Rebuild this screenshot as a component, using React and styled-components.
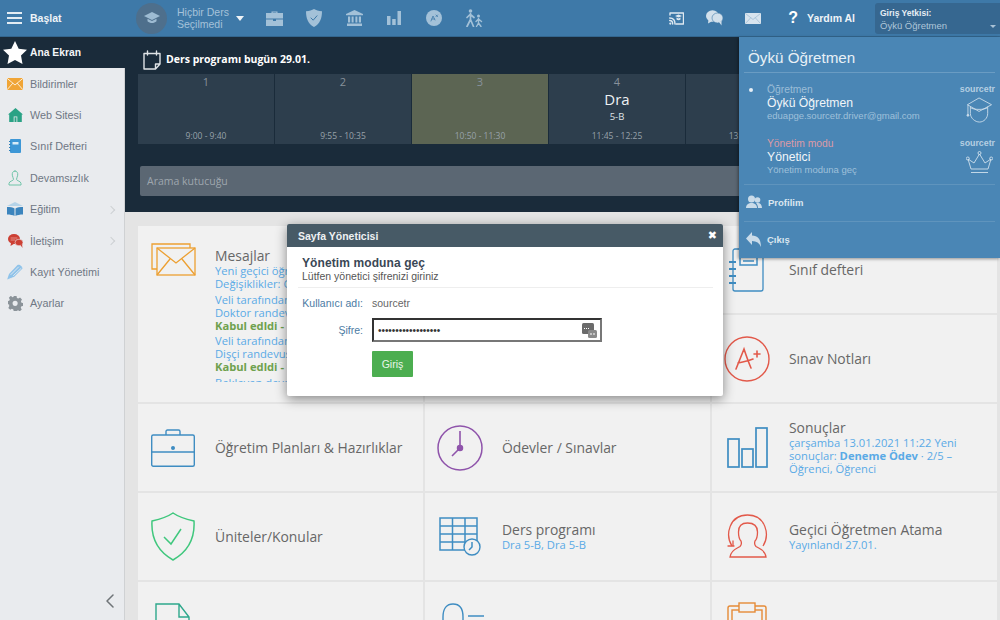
import styled, { createGlobalStyle } from 'styled-components'

const GlobalStyle = createGlobalStyle`
    html, body { margin: 0; padding: 0; background: #e4e4e4; }
    * { box-sizing: border-box; }
`

const Line = ({ d, c = 'currentColor', w = 1.4 }) => <path d={d} fill="none" stroke={c} strokeWidth={w} strokeLinecap="round" strokeLinejoin="round" />

/* top bar icons */
const CapIcon = () => (
    <svg width="16" height="12" viewBox="0 0 16 12" fill="#9dbbd2"><path d="M8 0 16 4 8 8 0 4z" /><path d="M3.500 6.700v2.600c2.500 2.400 6.500 2.400 9 0V6.700L8 9z" /></svg>
)
const CaseSolid = () => (
    <svg width="17" height="15" viewBox="0 0 17 15" fill="currentColor"><path d="M5.500 2V.6h6V2H17v5.500H0V2zM6.700 2h3.600v-.6H6.700z" /><path d="M0 8.500h7v1.500h3V8.500h7V15H0z" /></svg>
)
const ShieldSolid = () => (
    <svg width="16" height="18" viewBox="0 0 16 18"><path d="M8 0c2 1.300 4.500 2 8 2.200 0 7-2 12.500-8 15.800C2 14.700 0 9.200 0 2.200 3.500 2 6 1.300 8 0z" fill="currentColor" /><Line d="M5 9l2.200 2.200L11 6.800" c="#3e79a8" w={1} /></svg>
)
const BankSolid = () => (
    <svg width="17" height="16" viewBox="0 0 17 16" fill="currentColor"><path d="M8.500 0 17 4v1.300H0V4z" /><path d="M2 6.500h2.200v6H2zM5.600 6.500h2v6h-2zM9.400 6.500h2v6h-2zM12.800 6.500H15v6h-2.200zM1 13.500h15V16H1z" /></svg>
)
const BarsSolid = () => (
    <svg width="14" height="14" viewBox="0 0 14 14" fill="currentColor"><path d="M0 5h3.500v9H0zM5.200 8h3.500v6H5.200zM10.500 0H14v14h-3.500z" /></svg>
)
const GradeSolid = () => (
    <svg width="16" height="16" viewBox="0 0 16 16"><circle cx="8" cy="8" r="8" fill="currentColor" /><Line d="M5 11l2-5 2 4M6 9h2.500M10 5l1.600 1.600M11.600 5 10 6.600" c="#3e79a8" w={.8} /></svg>
)
const WalkSolid = () => (
    <svg width="18" height="18" viewBox="0 0 18 18"><circle cx="5.500" cy="2" r="1.800" fill="currentColor" /><circle cx="13.500" cy="7" r="1.500" fill="currentColor" /><Line d="M5.500 4.500v6M5.500 5 2 8.500M5.500 5.500 9 8.500M5.500 10.500 2 17.500M5.500 10.500l3 7" w={1.700} /><Line d="M13.500 9.500v4.500M13.500 10l-2.500 2.500M13.500 10l3 2.500M13.500 14l-2 3.500M13.500 14l2.500 3.500" w={1.400} /></svg>
)
const CastIcon = () => (
    <svg width="15" height="13" viewBox="0 0 15 13"><Line d="M1 3V1h13.500v11H7" c="#dfe9f1" /><path d="M6 4l3.500-1.500L13 4 9.500 5.500z" fill="#dfe9f1" /><path d="M7.500 5.500v2c1.200 1 2.800 1 4 0v-2L9.500 6.500z" fill="#dfe9f1" /><Line d="M.7 6c3.300 0 5.300 2 5.300 6M.7 8.500c2 0 3 1.400 3 3.500" c="#dfe9f1" /><circle cx="1.300" cy="11.600" r="1.100" fill="#dfe9f1" /></svg>
)
const ChatIcon = () => (
    <svg width="17" height="16" viewBox="0 0 17 16" fill="#d2e0eb"><ellipse cx="6.500" cy="6" rx="6.500" ry="5.800" /><path d="M2.500 9.500 2 13.500 6.500 11z" /><ellipse cx="11.500" cy="8" rx="5.500" ry="5" stroke="#3e79a8" strokeWidth=".6" /><path d="M13 12l2.500 3.500V11z" /></svg>
)
const MailIcon = () => (
    <svg width="16" height="11" viewBox="0 0 16 11"><rect width="16" height="11" fill="#d8e4ee" /><Line d="M.5.500 8 6.500 15.500.500M.5 10.500 5.500 5M15.500 10.500 10.500 5" c="#8fb2cd" w={.6} /></svg>
)

/* sidebar icons */
const Star = () => (
    <svg width="24" height="23" viewBox="0 0 24 23" fill="#fff"><path d="M12 0l3.700 7.700 8.300 1.100-6 5.800 1.500 8.400L12 19l-7.500 4L6 14.600 0 8.800l8.300-1.100z" /></svg>
)
const SideMail = () => (
    <svg width="16" height="12" viewBox="0 0 16 12"><rect width="16" height="12" fill="#f0a537" /><Line d="M.3.500 8 7 15.700.500M.3 11.500 5.500 5.500M15.700 11.500 10.500 5.500" c="#fff" w={.8} /></svg>
)
const SideHome = () => (
    <svg width="15" height="14" viewBox="0 0 15 14"><path d="M7.500 0 15 6.500h-1.200V14H1.200V6.500H0z" fill="#2aa285" /><path d="M5.700 14V8.500h3.600V14H8.500V9.300h-2V14z" fill="#e9ebee" /></svg>
)
const SideBook = () => (
    <svg width="12" height="14" viewBox="0 0 12 14"><rect x="1" width="11" height="14" rx="1" fill="#3d97d6" /><rect x="3.500" y="3" width="6" height="2.500" fill="#d8ecf8" /><path d="M0 2.500h1.500M0 5.500h1.500M0 8.500h1.500M0 11.500h1.500" stroke="#2d7fb8" /></svg>
)
const SidePerson = () => (
    <svg width="14" height="16" viewBox="0 0 14 16"><Line d="M7 1C4.800 1 4 3 4.300 5.200 4.500 7 5.500 8 5.500 9.300 5.500 11 1 11 1 13.500V15h12v-1.500C13 11 8.500 11 8.500 9.300 8.500 8 9.500 7 9.700 5.200 10 3 9.200 1 7 1z" c="#6ec4a8" w={1} /></svg>
)
const SideEdu = () => (
    <svg width="16" height="14" viewBox="0 0 16 14"><path d="M8 0 16 4H0z" fill="#b5d3e8" /><path d="M0 5c3 0 6 .3 7.500 1.500V14C6 13 3 12.500 0 12.500zM16 5c-3 0-6 .3-7.500 1.500V14c1.500-1 4.500-1.500 7.500-1.500z" fill="#3b84bd" /></svg>
)
const SideTalk = () => (
    <svg width="15" height="14" viewBox="0 0 15 14"><ellipse cx="6" cy="5" rx="6" ry="5" fill="#cc3f33" /><path d="M3 8.500 2.500 12 6.500 9.500z" fill="#cc3f33" /><ellipse cx="11" cy="8.500" rx="4" ry="3.300" fill="#cc3f33" stroke="#e9ebee" strokeWidth=".6" /><path d="M12.500 11 14.500 14 14 10z" fill="#cc3f33" /><Line d="M3 4h6M3 6h4" c="#eeb0a9" w={.7} /></svg>
)
const SidePen = () => (
    <svg width="16" height="16" viewBox="0 0 16 16"><path d="M0 16l2-6L10.500 1c1.500-1.300 5 1.200 5 3.500L6.500 13.500z" fill="#8fc3ea" /><Line d="M4 10.500 11.500 3M6.500 11.500 14 4.500M0 16l6.500-2.500" c="#e9ebee" w={.9} /></svg>
)
const SideGear = () => (
    <svg width="15" height="15" viewBox="0 0 15 15" fill="#8b9399"><path d="M6 0h3l.4 2 1.500.7L12.700 1.600l2 2.100-1.100 1.800.6 1.500 1.800.5v3l-1.900.4-.7 1.500 1.100 1.700-2.100 2-1.800-1-1.500.6L9 16H6l-.4-1.900-1.500-.6-1.700 1-2.100-2 1-1.800L1.200 9 -.5 8.500v-3l1.800-.4.600-1.500-1-1.800 2.100-2L4.700 1.400l1-.4zM7.500 5a2.700 2.700 0 1 0 0 5.400 2.700 2.700 0 0 0 0-5.400z" transform="scale(.95)" /></svg>
)

/* tile icons */
const TileMail = () => (
    <svg width="45" height="33" viewBox="0 0 45 33" stroke="#eda032" strokeWidth="1.300" fill="none"><path d="M6 26H1V1h38v4" /><rect x="6" y="5" width="38" height="27" fill="#f1f1f1" /><path d="M6 5l19 15L44 5M6 32l13-16M44 32 31 16" /></svg>
)
const TileBook = () => (
    <svg width="36" height="44" viewBox="0 0 36 44" fill="none" stroke="#3f8dc2" strokeWidth="1.300"><rect x="4" y="1" width="30" height="42" rx="2" /><rect x="11" y="5" width="17" height="12" strokeWidth="1.500" /><path d="M14 9h11M14 13h11" /><path d="M0 14h7M0 21h7M0 28h7M0 35h7" strokeWidth="1.800" /></svg>
)
const TileGrade = () => (
    <svg width="46" height="46" viewBox="0 0 46 46" fill="none" stroke="#e2594a" strokeWidth="1.400"><circle cx="23" cy="23" r="22" /><path d="M12 33 20 13c2 6 4 12 7 19M14 27c5-1 10-2 15-4M33 15v6M30 18h6" strokeWidth="1.600" strokeLinecap="round" /></svg>
)
const TileCase = () => (
    <svg width="44" height="38" viewBox="0 0 44 38" fill="none" stroke="#3f8dc2" strokeWidth="1.400"><rect x=".7" y="6" width="42.600" height="31.300" rx="1.500" /><path d="M15 6V2.500C15 1.500 15.500 1 16.500 1h11c1 0 1.500.5 1.500 1.500V6M.7 23h42.600" /><circle cx="22" cy="19" r="1.300" fill="#3f8dc2" /></svg>
)
const TileClock = () => (
    <svg width="46" height="46" viewBox="0 0 46 46" fill="none" stroke="#8f54ab" strokeWidth="1.500"><circle cx="23" cy="23" r="22" /><path d="M23 6v17L15 31" strokeWidth="1.600" /><circle cx="23" cy="23" r="2.500" fill="#8f54ab" /></svg>
)
const TileBars = () => (
    <svg width="41" height="41" viewBox="0 0 41 41" fill="none" stroke="#3f8dc2" strokeWidth="1.700"><rect x="1" y="12" width="11" height="28" /><rect x="15" y="22" width="11" height="18" /><rect x="29" y="1" width="11" height="39" /></svg>
)
const TileShield = () => (
    <svg width="44" height="49" viewBox="0 0 44 49" fill="none" stroke="#3fc77d" strokeWidth="1.500"><path d="M22 1c5 3.500 12 6 21 8 1 17-5 30-21 39C6 39 0 26 1 9c9-2 16-4.500 21-8z" /><path d="M13 25l7 7 10-15" /></svg>
)
const TileTable = () => (
    <svg width="42" height="39" viewBox="0 0 42 39" fill="none" stroke="#3f8dc2" strokeWidth="1.500"><path d="M1 1h37v32H1zM1 9h37M1 17h37M1 25h37M13.500 1v32M26 1v32" /><circle cx="33" cy="30" r="8" fill="#f1f1f1" strokeWidth="1.400" /><path d="M33 25v5l-3 3" /></svg>
)
const TileSwap = () => (
    <svg width="41" height="45" viewBox="0 0 41 45" fill="none" stroke="#e2594a" strokeWidth="1.300"><path d="M5 32C-2 21 2 1 20.500 1 39 1 43 21 36 32" /><path d="M1 32h6M6 27v5" strokeLinecap="round" /><path d="M14 27c1 3 .5 4-1 5.500-3 2-9 3-10 10.500h36c-1-7.500-7-8.500-10-10.500-1.500-1.500-2-2.500-1-5.500 2-2 2.500-5 2.500-9 0-6-4-9-10-9s-9 3-9 9c0 4 .5 7 2.500 9z" /></svg>
)
const TileDoc = () => (
    <svg width="36" height="46" viewBox="0 0 36 46" fill="none" stroke="#2ea88c" strokeWidth="1.400"><path d="M1 1h23l10 13v31H1zM24 1v13h10" /><path d="M12 28l5 5 8-10" /></svg>
)
const TileList = () => (
    <svg width="48" height="46" viewBox="0 0 48 46" fill="none" stroke="#3f8dc2" strokeWidth="1.400"><path d="M7 44V14C7 5 11 1 17 1s10 4 10 13v30" /><path d="M32 13h16M32 23h16M32 33h16" strokeWidth="1.600" /></svg>
)
const TileClip = () => (
    <svg width="40" height="48" viewBox="0 0 40 48" fill="none" stroke="#e58b37" strokeWidth="1.400"><rect x="1" y="4" width="38" height="43" rx="2" /><rect x="5" y="8" width="30" height="35" /><rect x="12" y="1" width="16" height="9" fill="#f1f1f1" /></svg>
)

/* dropdown and modal icons */
const GradFace = () => (
    <svg width="27" height="27" viewBox="0 0 27 27" fill="none" stroke="#cfe0ec" strokeWidth=".9"><path d="M13 1 26 8 13 15 1 8zM4 10v7c0 5 5 9 9.500 9S22 22 22 17v-7M4 11c3 2.500 15 2.500 18 0M1.500 8v10" /><circle cx="1.500" cy="19" r="1" fill="#cfe0ec" /></svg>
)
const Crown = () => (
    <svg width="27" height="23" viewBox="0 0 27 23" fill="none" stroke="#cfe0ec" strokeWidth=".9"><path d="M5 21.500h17M5 18h17l3-10-6 4-5.500-9L8 12 2 8z" /><circle cx="13.500" cy="2" r="1.500" /><circle cx="1.800" cy="7.500" r="1.500" /><circle cx="25.200" cy="7.500" r="1.500" /></svg>
)
const People = () => (
    <svg width="16" height="14" viewBox="0 0 16 14" fill="#c9dbe9"><circle cx="5.500" cy="4" r="3.500" /><path d="M0 13c0-3.500 2.500-5 5.500-5S11 9.500 11 13z" /><circle cx="11.500" cy="5" r="2.800" /><path d="M12 13c0-2-.5-3.500-2-4.500 3-1.500 6 .5 6 4.500z" /></svg>
)
const Back = () => (
    <svg width="15" height="15" viewBox="0 0 15 15" fill="#c9dbe9"><path d="M6 0v3.500c5.500 0 9 3.500 9 11.500-1.500-4-4.500-6-9-6v4L0 6.500z" /></svg>
)
const KeyIcon = () => (
    <svg width="15" height="15" viewBox="0 0 15 15"><rect width="12" height="11" rx="1.500" fill="#6b6b6b" /><rect x="6" y="7" width="9" height="8" rx="1.500" fill="#8b8b8b" /><path d="M2 5.500h6" stroke="#fff" strokeDasharray="1 1" /><path d="M8 11h5" stroke="#fff" strokeDasharray="2 1" /></svg>
)

const TOP_ICONS = [CaseSolid, ShieldSolid, BankSolid, BarsSolid, GradeSolid, WalkSolid]

const MENU = [
    { label: 'Bildirimler', Icon: SideMail },
    { label: 'Web Sitesi', Icon: SideHome },
    { label: 'Sınıf Defteri', Icon: SideBook },
    { label: 'Devamsızlık', Icon: SidePerson },
    { label: 'Eğitim', Icon: SideEdu, more: true },
    { label: 'İletişim', Icon: SideTalk, more: true },
    { label: 'Kayıt Yönetimi', Icon: SidePen },
    { label: 'Ayarlar', Icon: SideGear },
]

const LESSONS = [
    { no: 1, time: '9:00 - 9:40' },
    { no: 2, time: '9:55 - 10:35' },
    { no: 3, time: '10:50 - 11:30', active: true },
    { no: 4, time: '11:45 - 12:25', name: 'Dra', group: '5-B' },
    { no: 5, time: '13:00 - 13:40' },
    { no: 6, time: '13:55 - 14:35' },
]

const App = () => {
    return (
        <Page>
            <GlobalStyle />
            <TopBar>
                <Burger><i /><i /><i /></Burger>
                <StartLabel>Başlat</StartLabel>
                <CapCircle><CapIcon /></CapCircle>
                <Subject>Hiçbir Ders<br />Seçilmedi</Subject>
                <Caret />
                <TopIcons>
                    {TOP_ICONS.map((Icon, i) => <TopIcon key={i}><Icon /></TopIcon>)}
                </TopIcons>
                <TopRight>
                    <CastIcon />
                    <ChatIcon />
                    <MailIcon />
                    <Help><b>?</b><span>Yardım Al</span></Help>
                    <LoginBox>
                        <strong>Giriş Yetkisi:</strong>
                        <span>Öykü Öğretmen</span>
                        <SmallCaret />
                    </LoginBox>
                </TopRight>
            </TopBar>

            <Body>
                <Sidebar>
                    <HomeRow><Star /><span>Ana Ekran</span></HomeRow>
                    {MENU.map(({ label, Icon, more }) => (
                        <MenuRow key={label}>
                            <MenuIcon><Icon /></MenuIcon>
                            <span>{label}</span>
                            {more && <Chevron />}
                        </MenuRow>
                    ))}
                    <Collapse><svg width="9" height="14" viewBox="0 0 9 14"><Line d="M8 1 2 7l6 6" c="#6f7478" w={1.500} /></svg></Collapse>
                </Sidebar>

                <Main>
                    <DarkHead>
                        <TodayRow>
                            <svg width="18" height="20" viewBox="0 0 18 20"><Line d="M1 3.500h16V14l-4.500 5H1zM4.500 1v4M13.500 1v4M17 14h-4.500v5" c="#dfe3e6" /></svg>
                            <span>Ders programı bugün 29.01.</span>
                        </TodayRow>
                        <Lessons>
                            {LESSONS.map(l => (
                                <Lesson key={l.no} $active={l.active}>
                                    <LessonNo>{l.no}</LessonNo>
                                    {l.name && <LessonName>{l.name}</LessonName>}
                                    {l.group && <LessonGroup>{l.group}</LessonGroup>}
                                    <LessonTime>{l.time}</LessonTime>
                                </Lesson>
                            ))}
                        </Lessons>
                        <SearchBox>Arama kutucuğu</SearchBox>
                    </DarkHead>

                    <Tiles>
                        <Tile $tall>
                            <TileIcon><TileMail /></TileIcon>
                            <TileText $tall>
                                <TileTitle>Mesajlar</TileTitle>
                                <MessageClip>
                                    <MessageGroup>
                                        <div>Yeni geçici öğretmen atama</div>
                                        <div>Değişiklikler: Geçici öğretmen</div>
                                    </MessageGroup>
                                    <MessageGroup>
                                        <div>Veli tarafından gönderildi</div>
                                        <div>Doktor randevusu</div>
                                        <Accepted>Kabul edldi - Öğrenci</Accepted>
                                    </MessageGroup>
                                    <MessageGroup>
                                        <div>Veli tarafından gönderildi</div>
                                        <div>Dişçi randevusu</div>
                                        <Accepted>Kabul edldi - Öğrenci</Accepted>
                                    </MessageGroup>
                                    <MessageGroup>
                                        <div>Bekleyen devamsızlık</div>
                                    </MessageGroup>
                                </MessageClip>
                            </TileText>
                        </Tile>
                        <Tile />
                        <Tile>
                            <TileIcon><TileBook /></TileIcon>
                            <TileTitle>Sınıf defteri</TileTitle>
                        </Tile>
                        <Tile />
                        <Tile>
                            <TileIcon><TileGrade /></TileIcon>
                            <TileTitle>Sınav Notları</TileTitle>
                        </Tile>
                        <Tile>
                            <TileIcon><TileCase /></TileIcon>
                            <TileTitle>Öğretim Planları & Hazırlıklar</TileTitle>
                        </Tile>
                        <Tile>
                            <TileIcon><TileClock /></TileIcon>
                            <TileTitle>Ödevler / Sınavlar</TileTitle>
                        </Tile>
                        <Tile>
                            <TileIcon><TileBars /></TileIcon>
                            <TileText>
                                <TileTitle>Sonuçlar</TileTitle>
                                <TileSub>çarşamba 13.01.2021 11:22 Yeni sonuçlar: <b>Deneme Ödev</b> · 2/5 – Öğrenci, Öğrenci</TileSub>
                            </TileText>
                        </Tile>
                        <Tile>
                            <TileIcon><TileShield /></TileIcon>
                            <TileTitle>Üniteler/Konular</TileTitle>
                        </Tile>
                        <Tile>
                            <TileIcon><TileTable /></TileIcon>
                            <TileText>
                                <TileTitle>Ders programı</TileTitle>
                                <TileSub>Dra 5-B, Dra 5-B</TileSub>
                            </TileText>
                        </Tile>
                        <Tile>
                            <TileIcon><TileSwap /></TileIcon>
                            <TileText>
                                <TileTitle>Geçici Öğretmen Atama</TileTitle>
                                <TileSub>Yayınlandı 27.01.</TileSub>
                            </TileText>
                        </Tile>
                        <Tile>
                            <TileIcon><TileDoc /></TileIcon>
                            <TileTitle>Sınav Soruları</TileTitle>
                        </Tile>
                        <Tile>
                            <TileIcon><TileList /></TileIcon>
                            <TileTitle>Personel Listesi</TileTitle>
                        </Tile>
                        <Tile>
                            <TileIcon><TileClip /></TileIcon>
                            <TileTitle>Raporlar</TileTitle>
                        </Tile>
                    </Tiles>
                </Main>
            </Body>

            <Modal>
                <ModalHead>
                    <span>Sayfa Yöneticisi</span>
                    <CloseX>✖</CloseX>
                </ModalHead>
                <ModalBody>
                    <ModalTitle>Yönetim moduna geç</ModalTitle>
                    <ModalHint>Lütfen yönetici şifrenizi giriniz</ModalHint>
                    <FormRow $first>
                        <FormLabel>Kullanıcı adı:</FormLabel>
                        <FormValue>sourcetr</FormValue>
                    </FormRow>
                    <FormRow>
                        <FormLabel>Şifre:</FormLabel>
                        <PasswordBox>
                            <Dots>••••••••••••••••••</Dots>
                            <KeyIcon />
                        </PasswordBox>
                    </FormRow>
                    <FormRow>
                        <FormLabel />
                        <EnterButton>Giriş</EnterButton>
                    </FormRow>
                </ModalBody>
            </Modal>

            <Dropdown>
                <DropTitle>Öykü Öğretmen</DropTitle>
                <RoleList>
                    <Role>
                        <Bullet />
                        <RoleText>
                            <RoleKind>Öğretmen</RoleKind>
                            <RoleName>Öykü Öğretmen</RoleName>
                            <RoleMail>eduapge.sourcetr.driver@gmail.com</RoleMail>
                        </RoleText>
                        <RoleSide>
                            <span>sourcetr</span>
                            <GradFace />
                        </RoleSide>
                    </Role>
                    <Role>
                        <BulletGap />
                        <RoleText>
                            <RoleKind $admin>Yönetim modu</RoleKind>
                            <RoleName>Yönetici</RoleName>
                            <RoleMail>Yönetim moduna geç</RoleMail>
                        </RoleText>
                        <RoleSide>
                            <span>sourcetr</span>
                            <Crown />
                        </RoleSide>
                    </Role>
                </RoleList>
                <DropLink><People /><span>Profilim</span></DropLink>
                <DropLink $last><Back /><span>Çıkış</span></DropLink>
            </Dropdown>
        </Page>
    )
}

export default App

const Page = styled.div`
    position: relative;
    width: 1000px;
    height: 620px;
    overflow: hidden;
    font-family: "Liberation Sans", Arial, sans-serif;
    background: #e4e4e4;
`

const TopBar = styled.header`
    display: flex;
    align-items: center;
    height: 37px;
    padding-left: 7px;
    background: #3e79a8;
    border-bottom: 1px solid #33668e;
`

const Burger = styled.div`
    display: flex;
    flex-direction: column;
    gap: 3px;
    width: 15px;
    margin-right: 8px;

    i {
        display: block;
        height: 2px;
        background: #e3ecf3;
    }
`

const StartLabel = styled.span`
    width: 106px;
    color: #eef3f7;
    font-size: 10.500px;
    font-weight: bold;
`

const CapCircle = styled.div`
    display: flex;
    align-items: center;
    justify-content: center;
    flex: none;
    width: 31px;
    height: 31px;
    margin-right: 10px;
    border-radius: 50%;
    background: #4e6f8c;
`

const Subject = styled.div`
    width: 59px;
    color: #a5c2d9;
    font-size: 10.500px;
    line-height: 12.500px;
`

const Caret = styled.span`
    width: 0;
    height: 0;
    border-left: 4.500px solid transparent;
    border-right: 4.500px solid transparent;
    border-top: 5px solid #eef3f7;
`

const TopIcons = styled.div`
    display: flex;
    align-items: center;
    margin-left: 10px;
    color: #a3c1d8;
`

const TopIcon = styled.div`
    display: flex;
    align-items: center;
    justify-content: center;
    width: 40px;
`

const TopRight = styled.div`
    display: flex;
    align-items: center;
    gap: 22px;
    margin-left: auto;
    height: 100%;
`

const Help = styled.div`
    display: flex;
    align-items: center;
    gap: 9px;
    margin-left: 5px;
    color: #eef3f7;
    font-size: 10.500px;
    font-weight: bold;

    b {
        font-size: 16px;
        color: #fff;
    }
`

const LoginBox = styled.div`
    position: relative;
    display: flex;
    flex-direction: column;
    justify-content: center;
    gap: 2px;
    align-self: flex-start;
    width: 125px;
    height: 31px;
    margin-top: 3px;
    margin-left: -2px;
    padding: 2px 0 0 5px;
    border-radius: 3px 0 0 3px;
    background: #366790;
    color: #afc6d9;
    font-size: 9.500px;

    strong {
        color: #e6eef4;
        font-size: 8.500px;
    }
`

const SmallCaret = styled.i`
    position: absolute;
    right: 4px;
    bottom: 6px;
    border-left: 3px solid transparent;
    border-right: 3px solid transparent;
    border-top: 3px solid #a9c2d6;
`

const Body = styled.div`
    display: flex;
    height: 583px;
`

const Sidebar = styled.aside`
    display: flex;
    flex-direction: column;
    flex: none;
    width: 125px;
    background: #e9ebee;
    border-right: 1px solid #cfd1d3;
`

const HomeRow = styled.div`
    display: flex;
    align-items: center;
    gap: 3px;
    height: 31px;
    margin-right: -1px;
    padding-left: 3px;
    background: #1a2b3a;
    color: #f4f6f8;
    font-size: 10.300px;
    font-weight: bold;
`

const MenuRow = styled.div`
    position: relative;
    display: flex;
    align-items: center;
    height: 31.400px;
    color: #6f7784;
    font-size: 10.800px;
`

const MenuIcon = styled.span`
    display: flex;
    align-items: center;
    justify-content: center;
    width: 30px;
`

const Chevron = styled.i`
    position: absolute;
    right: 10px;
    top: 13px;
    width: 6px;
    height: 6px;
    border-top: 1px solid #cdd0d3;
    border-right: 1px solid #cdd0d3;
    transform: rotate(45deg);
`

const Collapse = styled.div`
    display: flex;
    justify-content: flex-end;
    margin-top: auto;
    padding: 0 10px 12px 0;
`

const Main = styled.main`
    flex: 1;
    min-width: 0;
    background: #e4e4e4;
`

const DarkHead = styled.section`
    height: 175px;
    padding: 12px 0 0 13px;
    background: #1a2b3a;
`

const TodayRow = styled.div`
    display: flex;
    align-items: center;
    gap: 5px;
    height: 22px;
    padding-left: 5px;
    color: #fff;
    font-family: "Open Sans", sans-serif;
    font-size: 10.500px;
    font-weight: 700;

    span {
        margin-top: -2px;
    }
`

const Lessons = styled.div`
    display: grid;
    grid-template-columns: repeat(6, 136px);
    column-gap: 1px;
    height: 70px;
    margin-top: 3px;
    font-family: "Open Sans", sans-serif;
    text-align: center;
`

const Lesson = styled.div`
    position: relative;
    padding-top: 1px;
    background: ${p => (p.$active ? '#5c6553' : '#2d3e4d')};
`

const LessonNo = styled.div`
    color: #87919b;
    font-size: 11px;
    line-height: 13px;
`

const LessonName = styled.div`
    margin-top: 1px;
    color: #eef1f3;
    font-size: 15px;
    line-height: 20px;
`

const LessonGroup = styled.div`
    margin-top: 1px;
    color: #dfe3e6;
    font-size: 9.500px;
    line-height: 14px;
`

const LessonTime = styled.div`
    position: absolute;
    left: 0;
    right: 0;
    bottom: 3px;
    color: #98a2aa;
    font-size: 8.500px;
`

const SearchBox = styled.div`
    display: flex;
    align-items: center;
    height: 30px;
    margin: 22px 0 0 2px;
    padding-left: 7px;
    border-radius: 2px;
    background: #5b6773;
    color: #9ea6ae;
    font-family: "Open Sans", sans-serif;
    font-size: 10.500px;
`

const Tiles = styled.section`
    display: grid;
    grid-template-columns: repeat(3, 285px);
    grid-auto-rows: 87px;
    gap: 2px;
    padding: 14px 0 0 13px;
    font-family: "Open Sans", sans-serif;
`

const Tile = styled.article`
    display: flex;
    align-items: ${p => (p.$tall ? 'flex-start' : 'center')};
    grid-row: ${p => (p.$tall ? 'span 2' : 'auto')};
    padding-top: ${p => (p.$tall ? '17px' : '0')};
    background: #f1f1f1;
    overflow: hidden;
`

const TileIcon = styled.div`
    display: flex;
    justify-content: center;
    flex: none;
    width: 70px;
    margin-right: 7px;
`

const TileText = styled.div`
    display: flex;
    flex-direction: column;
    min-width: 0;
    margin-top: ${p => (p.$tall ? '5px' : '0')};
    padding-right: 10px;
`

const TileTitle = styled.div`
    color: #676767;
    font-size: 13.900px;
    line-height: 16px;
    white-space: nowrap;
`

const TileSub = styled.div`
    color: #5aaae6;
    font-size: 11.200px;
    line-height: 13px;

    b {
        font-weight: 700;
    }
`

const MessageClip = styled.div`
    height: 118px;
    overflow: hidden;
    color: #5aaae6;
    font-size: 11.200px;
    line-height: 13px;
    white-space: nowrap;
`

const MessageGroup = styled.div`
    margin-bottom: 2.500px;
`

const Accepted = styled.div`
    color: #6fa14e;
    font-weight: 700;
`

const Modal = styled.div`
    position: absolute;
    left: 287px;
    top: 224px;
    width: 436px;
    height: 172px;
    border-radius: 2px;
    background: #fff;
    box-shadow: 0 3px 12px rgba(0, 0, 0, 0.45);
`

const ModalHead = styled.div`
    display: flex;
    align-items: center;
    justify-content: space-between;
    height: 23px;
    padding: 0 6px 0 11px;
    border-radius: 2px 2px 0 0;
    background: #475a66;
    color: #eef1f3;
    font-size: 10.500px;
    font-weight: bold;
`

const CloseX = styled.span`
    color: #fff;
    font-family: "DejaVu Sans", sans-serif;
    font-size: 11px;
`

const ModalBody = styled.div`
    padding: 10px 10px 0 11px;
`

const ModalTitle = styled.div`
    padding-left: 4px;
    color: #3a4755;
    font-size: 12px;
    font-weight: bold;
    letter-spacing: .1px;
    line-height: 13px;
`

const ModalHint = styled.div`
    padding: 0 0 4px 4px;
    color: #555;
    font-size: 10.500px;
    line-height: 13px;
    border-bottom: 1px solid #eee;
`

const FormRow = styled.div`
    display: flex;
    align-items: center;
    gap: 9px;
    margin-top: 8px;
    min-height: 14px;
`

const FormLabel = styled.span`
    width: 65px;
    color: #4b7aa3;
    font-size: 10.500px;
    text-align: right;
`

const FormValue = styled.span`
    color: #666;
    font-size: 10.500px;
`

const PasswordBox = styled.div`
    display: flex;
    align-items: center;
    justify-content: space-between;
    width: 230px;
    height: 24px;
    padding: 0 3px 0 4px;
    border: 2px solid #333;
    border-right-color: #777;
    border-bottom-color: #777;
`

const Dots = styled.span`
    color: #333;
    font-size: 10px;
    letter-spacing: -.05px;
`

const EnterButton = styled.div`
    display: flex;
    align-items: center;
    justify-content: center;
    width: 41px;
    height: 26px;
    margin-top: 1px;
    border-radius: 1px;
    background: #4cae50;
    color: #eaf5ea;
    font-size: 10.500px;
`

const Dropdown = styled.div`
    position: absolute;
    left: 739px;
    top: 37px;
    width: 261px;
    height: 221px;
    padding: 0 5px 0 5px;
    background: #4a86b5;
    box-shadow: -1px 1px 3px rgba(0, 0, 0, 0.4);
    color: #fff;
`

const DropTitle = styled.div`
    height: 36px;
    padding: 12px 0 0 4px;
    border-bottom: 1px solid #6a9cc3;
    color: #e8f0f6;
    font-size: 15.200px;
    line-height: 17px;
`

const RoleList = styled.div`
    display: flex;
    flex-direction: column;
    gap: 14px;
    height: 112px;
    padding-top: 10px;
    border-bottom: 1px solid #5f94bd;
`

const Role = styled.div`
    display: flex;
    height: 40px;
`

const Bullet = styled.i`
    flex: none;
    width: 4px;
    height: 4px;
    margin: 5px 14px 0 5px;
    border-radius: 50%;
    background: #e6eff6;
`

const BulletGap = styled.i`
    flex: none;
    width: 23px;
`

const RoleText = styled.div`
    flex: 1;
`

const RoleKind = styled.div`
    color: ${p => (p.$admin ? '#dc9aa6' : '#9bbdd7')};
    font-size: 10.300px;
    line-height: 13px;
`

const RoleName = styled.div`
    color: #f1f5f8;
    font-size: 12.200px;
    line-height: 14px;
`

const RoleMail = styled.div`
    color: #9fc0da;
    font-size: 9.500px;
    line-height: 11px;
`

const RoleSide = styled.div`
    display: flex;
    flex-direction: column;
    align-items: flex-end;
    gap: 1px;
    color: #b5cfe2;
    font-size: 8.800px;
    font-weight: bold;
    line-height: 13px;

    svg {
        margin-right: 2px;
    }
`

const DropLink = styled.div`
    display: flex;
    align-items: center;
    gap: 6px;
    height: 37px;
    padding: 0 0 2px 2px;
    border-bottom: ${p => (p.$last ? 'none' : '1px solid #5f94bd')};
    color: #dbe7f0;
    font-size: 9.500px;
    font-weight: bold;
`
